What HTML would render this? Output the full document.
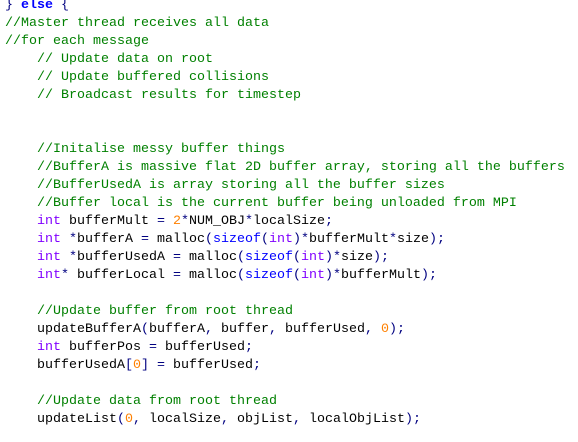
<!DOCTYPE html>
<html><head><style>
body{margin:0;background:#fff;width:578px;height:442px;overflow:hidden}
pre{margin:0;position:absolute;left:5px;top:-3px;font-family:"Liberation Mono",monospace;font-size:13.33px;line-height:18px;color:#000}
.c{color:#008000}.k{color:#8000ff}.b{color:#0000ff}.e{color:#0000ff;font-weight:bold}.n{color:#ff8000}.o{color:#000080}
</style></head><body><pre><span class="o">}</span> <span class="e">else</span> <span class="o">{</span>
<span class="c">//Master thread receives all data</span>
<span class="c">//for each message</span>
    <span class="c">// Update data on root</span>
    <span class="c">// Update buffered collisions</span>
    <span class="c">// Broadcast results for timestep</span>


    <span class="c">//Initalise messy buffer things</span>
    <span class="c">//BufferA is massive flat 2D buffer array, storing all the buffers</span>
    <span class="c">//BufferUsedA is array storing all the buffer sizes</span>
    <span class="c">//Buffer local is the current buffer being unloaded from MPI</span>
    <span class="k">int</span> bufferMult <span class="o">=</span> <span class="n">2</span><span class="o">*</span>NUM_OBJ<span class="o">*</span>localSize<span class="o">;</span>
    <span class="k">int</span> <span class="o">*</span>bufferA <span class="o">=</span> malloc<span class="o">(</span><span class="b">sizeof</span><span class="o">(</span><span class="k">int</span><span class="o">)*</span>bufferMult<span class="o">*</span>size<span class="o">);</span>
    <span class="k">int</span> <span class="o">*</span>bufferUsedA <span class="o">=</span> malloc<span class="o">(</span><span class="b">sizeof</span><span class="o">(</span><span class="k">int</span><span class="o">)*</span>size<span class="o">);</span>
    <span class="k">int</span><span class="o">*</span> bufferLocal <span class="o">=</span> malloc<span class="o">(</span><span class="b">sizeof</span><span class="o">(</span><span class="k">int</span><span class="o">)*</span>bufferMult<span class="o">);</span>

    <span class="c">//Update buffer from root thread</span>
    updateBufferA<span class="o">(</span>bufferA<span class="o">,</span> buffer<span class="o">,</span> bufferUsed<span class="o">,</span> <span class="n">0</span><span class="o">);</span>
    <span class="k">int</span> bufferPos <span class="o">=</span> bufferUsed<span class="o">;</span>
    bufferUsedA<span class="o">[</span><span class="n">0</span><span class="o">]</span> <span class="o">=</span> bufferUsed<span class="o">;</span>

    <span class="c">//Update data from root thread</span>
    updateList<span class="o">(</span><span class="n">0</span><span class="o">,</span> localSize<span class="o">,</span> objList<span class="o">,</span> localObjList<span class="o">);</span>
</pre></body></html>
